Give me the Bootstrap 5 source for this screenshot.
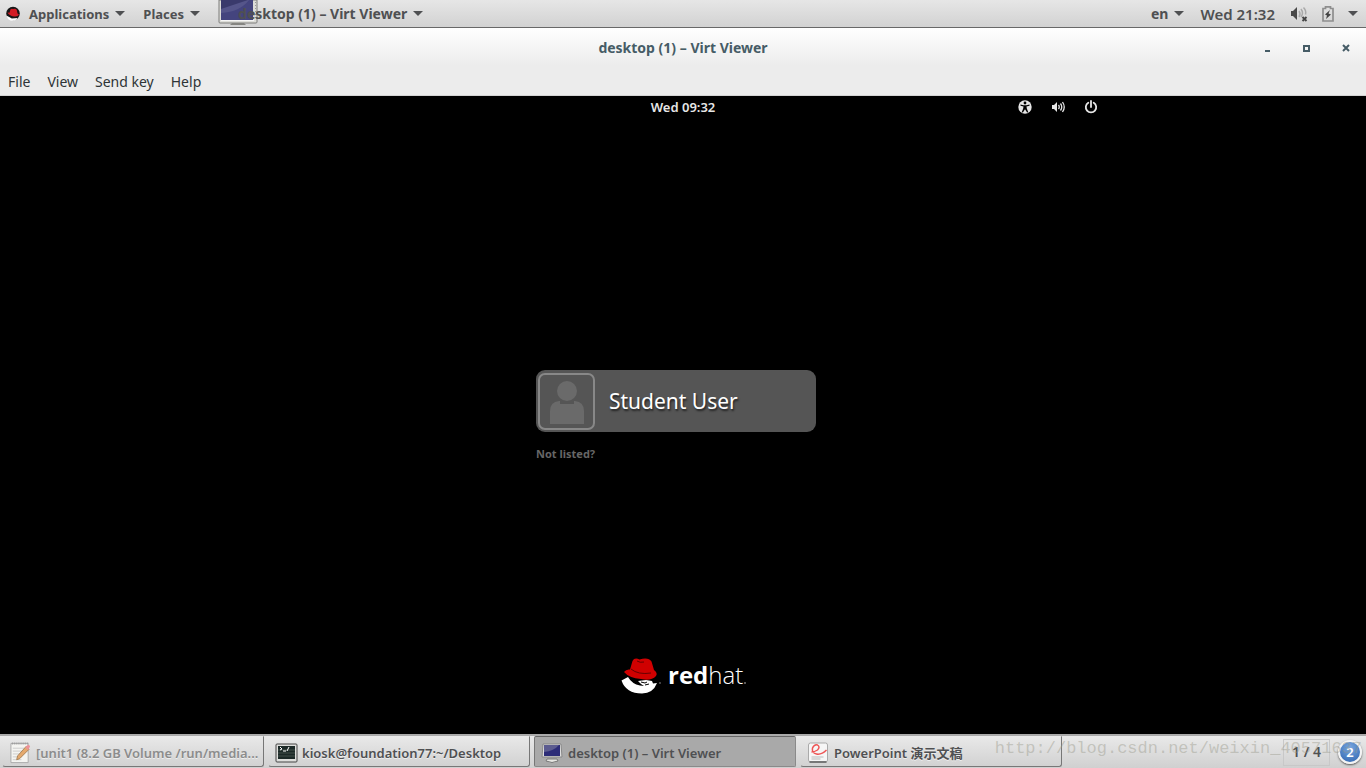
<!DOCTYPE html>
<html lang="en">
<head>
<meta charset="utf-8">
<meta name="viewport" content="width=device-width, initial-scale=1">
<title>desktop (1) – Virt Viewer</title>
<link href="https://cdn.jsdelivr.net/npm/bootstrap@5.3.0/dist/css/bootstrap.min.css" rel="stylesheet">
<style>
  body { font-family: "Noto Sans", "Open Sans", "Noto Sans CJK SC", sans-serif; font-size: 14px; line-height: 20px; background: #000; }
  button { font: inherit; color: inherit; background: none; border: 0; padding: 0; }
  svg { display: block; flex: none; }
  .panel-top { height: 28px; background: linear-gradient(#e6e6e6, #d2d2d2); border-bottom: 1px solid #686868; color: #4f5052; font-weight: 700; text-shadow: 0 1px #f0f0f0; }
  .panel-menus { gap: 18px; font-size: 13px; }
  .panel-status { gap: 16px; }
  .status-icons { gap: 14px; }
  .clock { font-size: 15px; font-weight: 600; }
  .caret { width: 0; height: 0; border: 5px solid transparent; border-top-color: #4f5052; border-bottom: 0; }
  button > .caret { margin-left: 6px; }
  .status-icons > .caret { margin-left: 0; }
  .app-menu { position: relative; padding-left: 20px; height: 27px; font-size: 14px; }
  .app-menu svg { position: absolute; left: 0; top: 0; }
  .app-menu span { position: relative; }
  .window-head { background: linear-gradient(#fff, #ececec 38px); border-bottom: 1px solid #d4d4d4; height: 68px; }
  .title-row { display: grid; grid-template-columns: 1fr auto 1fr; height: 40px; color: #465c66; font-weight: 700; }
  .window-buttons { padding-right: 12px; }
  .menu-row { height: 27px; gap: 17px; color: #2e3436; }
  .guest { display: grid; grid-template-rows: 1fr auto 1fr; max-width: 852px; width: 100%; color: #e6e6e6; }
  .guest-bar { display: grid; grid-template-columns: 1fr auto 1fr; font-size: 13px; height: 22px; font-weight: 600; }
  .guest-icons { gap: 11px; padding-right: 7px; }
  .guest-brand { padding-bottom: 39px; }
  .login { width: 294px; padding: 4px 14px 0 0; }
  .user-row { height: 62px; padding-left: 2px; gap: 14px; background: #555; border-radius: 9px; color: #fff; font-size: 21px; text-shadow: 1px 2px 2px #222; }
  .avatar { width: 57px; height: 57px; border: 2px solid #888; border-radius: 7px; }
  .not-listed { color: #666; font-size: 11px; font-weight: 700; }
  .taskbar { height: 34px; background: linear-gradient(#e9e9e9, #d0d0d0); border-top: 2px solid #aaa; font-size: 13px; font-weight: 600; color: #4f5052; position: relative; }
  .tasks { padding-left: 2px; }
  .task { flex: 0 1 262px; height: 31px; padding: 2px 0 0 6px; border: 1px solid transparent; border-right-color: #777; border-bottom-color: #777; border-radius: 0 0 3px 3px; text-shadow: 0 1px #eee; white-space: nowrap; }
  .task.minimized { color: #8c8c8c; }
  .task.active { background: #a9a9a9; border-color: #666 #8a8a8a #8a8a8a #777; border-radius: 2px; text-shadow: none; }
  .workspace { width: 47px; height: 27px; border: 1px solid #c8c8c8; font-size: 14px; }
  .notice { width: 24px; height: 24px; border: 2px solid #f4f4f4; border-radius: 50%; background: radial-gradient(circle at 50% 30%, #7aa8e0, #2c62ae); box-shadow: 0 1px 2px #555; color: #fff; text-shadow: none; }
  .watermark { position: absolute; right: 4px; top: 3px; font: 17px/20px "Liberation Mono", monospace; color: rgba(150,150,135,.42); pointer-events: none; white-space: nowrap; }
</style>
</head>
<body class="d-flex flex-column min-vh-100">
<header class="panel-top d-flex align-items-center justify-content-between">
  <nav class="panel-menus d-flex align-items-center">
    <button class="d-flex align-items-center ps-1">
      <svg class="me-2" width="17" height="16" viewBox="0 0 17 16"><circle cx="9" cy="7.500" r="6.800" fill="#171717"/><path d="M2.300 9.500q3 1.500 5.500 3l6-.5q-2 2.800-5 2.800-5 0-6.500-5.300" fill="#fff"/><path d="M3.500 6.500l2 .3 1-3.500q1-1 2.500-.3 3-.8 3.800 1l.7 3.500 1.500 1q-1 2.500-5 2-5-1-6.500-4" fill="#d21c24"/></svg>
      Applications<i class="caret"></i></button>
    <button class="d-flex align-items-center">Places<i class="caret"></i></button>
    <button class="app-menu d-flex align-items-center">
      <svg width="42" height="27" viewBox="0 0 42 27"><path d="M1 0H39V22q0 1-1 1H2q-1 0-1-1z" fill="#ddddd8" stroke="#7d7d7b"/><path d="M3 0H35V20H3z" fill="#44447e"/><path d="M3 13Q22 12 31 0H3z" fill="#55558a"/><path d="M3 0H30L3 9z" fill="#3a3a6c"/><path d="M3 20.500h33" stroke="#f5f5f5"/><path d="M37.500 2v17" stroke="#999" stroke-dasharray="1 2"/><path d="M14 23h12l2 2H12z" fill="#858581"/></svg>
      <span>desktop (1) – Virt Viewer</span><i class="caret"></i></button>
  </nav>
  <div class="panel-status d-flex align-items-center pe-2">
    <button class="d-flex align-items-center">en<i class="caret"></i></button>
    <button class="clock">Wed 21:32</button>
    <button class="status-icons d-flex align-items-center" aria-label="System menu">
      <svg width="17" height="16" viewBox="0 0 17 16"><path d="M0 5h2l4-4v13l-4-4H0z" fill="#484848"/><path d="M8 5q2 3 0 6M10 3q3 4 0 8M12.500 1.500q3 3 2 7" fill="none" stroke="#aaa" stroke-width="1.500"/><path d="M11.500 11l4 4m0-4l-4 4" stroke="#444" stroke-width="1.800"/></svg>
      <svg width="12" height="16" viewBox="0 0 12 16"><path d="M1 2.500h2.500v-1.700h5v1.700H11v12.500H1z" fill="none" stroke="#8e8e8e" stroke-width="1.700"/><path d="M8 4L3 8.500l2 1L4 13l5-4.500-2.500-1z" fill="#444"/></svg>
      <i class="caret"></i></button>
  </div>
</header>
<section class="window-head">
  <div class="title-row align-items-center">
    <span></span><span>desktop (1) – Virt Viewer</span>
    <div class="window-buttons d-flex justify-content-end align-items-center gap-4">
      <button class="px-1" aria-label="Minimize"><svg width="7" height="8"><path d="M1 6h5v2H1z" fill="#465c66"/></svg></button>
      <button class="px-1" aria-label="Maximize"><svg width="7" height="7"><path d="M1 1h5v5H1z" fill="none" stroke="#465c66" stroke-width="2"/></svg></button>
      <button class="px-1" aria-label="Close"><svg width="8" height="8"><path d="M1 1l6 6m0-6L1 7" stroke="#465c66" stroke-width="2"/></svg></button>
    </div>
  </div>
  <nav class="menu-row d-flex align-items-center px-2">
    <button>File</button><button>View</button><button>Send key</button><button>Help</button>
  </nav>
</section>
<main class="flex-grow-1 d-flex justify-content-center">
  <div class="guest">
    <div class="guest-bar align-items-center">
      <span></span><span>Wed 09:32</span>
      <div class="guest-icons d-flex justify-content-end">
        <button class="px-1" aria-label="Accessibility"><svg width="14" height="14" viewBox="0 0 14 14"><circle cx="7" cy="7" r="6.700" fill="#e6e6e6"/><circle cx="7" cy="3" r="1.400"/><path d="M2.500 4.500l3 .7h3l3-.7v1.300l-3 .8.300 2 1.500 3.600-1.200.4L7 9.300l-2.100 3.300-1.200-.4L5.200 8.600l.3-2-3-.8z"/></svg></button>
        <button class="px-1" aria-label="Volume"><svg width="14" height="14" viewBox="0 0 14 14"><path d="M1 5h2l3-3v10L3 9H1z" fill="#e6e6e6"/><path d="M7.500 5q1.500 2 0 4M9.500 3.500q2.500 3.500 0 7M11.500 2q3.500 5 0 10" fill="none" stroke="#e6e6e6" stroke-width="1.300"/></svg></button>
        <button class="px-1" aria-label="Power"><svg width="14" height="14" viewBox="0 0 14 14"><path d="M4.300 2.800a5.200 5.200 0 1 0 5.400 0M7 1v6" fill="none" stroke="#e6e6e6" stroke-width="1.800" stroke-linecap="round"/></svg></button>
      </div>
    </div>
    <div class="login mx-auto d-flex flex-column">
      <button class="user-row d-flex align-items-center text-start">
        <span class="avatar d-flex align-items-center justify-content-center"><svg width="36" height="46" viewBox="0 0 36 46"><circle cx="18" cy="13" r="10" fill="#6a6a6a"/><path d="M1 46V33q0-9 9-10h1v3h14v-3h1q9 1 9 10v13z" fill="#6a6a6a"/></svg></span>Student User</button>
      <button class="not-listed align-self-start mt-2 pt-1">Not listed?</button>
    </div>
    <div class="guest-brand align-self-end d-flex justify-content-center">
      <svg width="126" height="38" viewBox="0 0 126 38" role="img" aria-label="redhat"><path d="M1.500 23.500L8 20q4 7 12 8.500l4 .5-3-2-3-3 8-1 6 1 1 2.500 4-.5q-4 10.500-15 10.500Q6 36.500 1.500 23.500" fill="#fff"/><path d="M21 25l4 1 2-1M25 28l4-1" stroke="#000" fill="none"/><path d="M4 15q2-3 6-2.500L12.500 4q2-4 7-1.500 9-2.500 12 2L34 13q4 3 2 6-5 5.500-15 3Q9 21 4 15" fill="#d00000"/><path d="M11 12q7 6 20 4M17 4q3 2 7 1" stroke="#600" fill="none"/><circle cx="40" cy="26" r="1" fill="#555"/><text x="48" y="27" font-family="Open Sans" font-size="24" fill="#fff"><tspan font-weight="700">red</tspan><tspan font-weight="300">hat</tspan></text><circle cx="125" cy="26" r="1" fill="#777"/></svg>
    </div>
  </div>
</main>
<footer class="taskbar d-flex">
  <div class="tasks d-flex flex-grow-1 gap-1">
    <button class="task minimized d-flex align-items-center"><svg class="me-1" width="23" height="24" viewBox="0 0 24 24"><path d="M2 2h18v20H2z" fill="#f4f4f1" stroke="#aaa"/><path d="M3 2h17" stroke="#999" stroke-width="2" stroke-dasharray="1 1"/><path d="M4 7h12M4 10h12M4 13h10M4 16h9M4 19h9" stroke="#ccc"/><path d="M8 19l1-4L18 5l3 3-10 10z" fill="#e5a96d" stroke="#a88358"/><path d="M17 6l2-2q2-1 3 1l-2 4z" fill="#ec9298"/></svg>[unit1 (8.2 GB Volume /run/media...</button>
    <button class="task d-flex align-items-center"><svg class="me-1" width="23" height="24" viewBox="0 0 23 24"><rect x="1" y="3" width="21" height="18" rx="1" fill="#dededc" stroke="#444"/><path d="M3 5h17v13H3z" fill="#1c2927"/><path d="M3 9h17M3 12h17M3 15h17" stroke="#42514b"/><path d="M5 6l2 2-2 1m3 1h3m1 0l2-4" fill="none" stroke="#fff"/></svg>kiosk@foundation77:~/Desktop</button>
    <button class="task active d-flex align-items-center"><svg class="me-1" width="23" height="24" viewBox="0 0 21 24"><path d="M1 3h18l1 13H0z" fill="#ddd" stroke="#888"/><path d="M2 4h16v11H2z" fill="#2c2c78"/><path d="M2 11Q12 10 17 4H2z" fill="#5c5c90"/><path d="M5 18h10l1 2q-6 3-12 0z" fill="#e7e7e3" stroke="#777"/></svg>desktop (1) – Virt Viewer</button>
    <button class="task d-flex align-items-center"><svg class="me-1" width="23" height="24" viewBox="0 0 22 24"><rect x="1" y="2" width="19" height="19" rx="2" fill="#f6f6f6" stroke="#aaa"/><path d="M2 21h17" stroke="#777" stroke-width="2"/><path d="M4 16h12M4 18h9" stroke="#bbb"/><path d="M19 9q-5 5-10 4-5-1-4-6 2-4 5-3 3 2 0 5-3 2-6 2" fill="none" stroke="#e55" stroke-width="1.500"/></svg>PowerPoint 演示文稿</button>
  </div>
  <div class="d-flex align-items-center gap-2 pe-1">
    <button class="workspace">1 / 4</button>
    <button class="notice d-flex align-items-center justify-content-center">2</button>
  </div>
  <span class="watermark">http://blog.csdn.net/weixin_40571637</span>
</footer>
<script src="https://cdn.jsdelivr.net/npm/bootstrap@5.3.0/dist/js/bootstrap.bundle.min.js"></script>
</body>
</html>
